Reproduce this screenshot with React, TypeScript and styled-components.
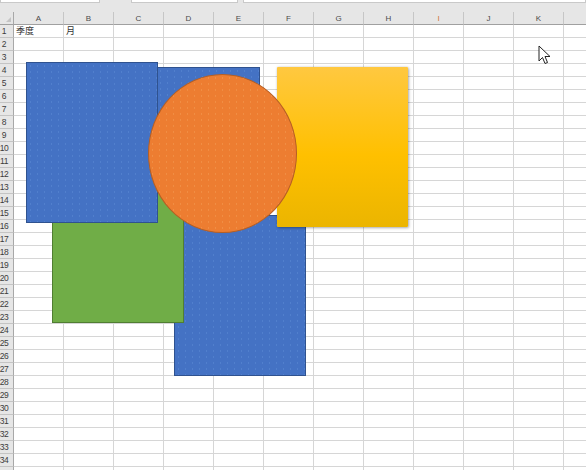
import styled, { createGlobalStyle } from 'styled-components';

const COLS = ['A', 'B', 'C', 'D', 'E', 'F', 'G', 'H', 'I', 'J', 'K', 'L'];
const ROW_COUNT = 35;
// last row / column only peek in at the window edge, their labels lie outside
const VISIBLE_ROWS = 34;
const VISIBLE_COLS = 11;

const GlobalStyle = createGlobalStyle`
  html, body {
    margin: 0;
    padding: 0;
    background: #fff;
  }
  body {
    font-family: "Liberation Sans", "Noto Sans CJK SC", sans-serif;
    overflow: hidden;
  }
`;

const Window = styled.div`
  position: relative;
  width: 586px;
  height: 470px;
  overflow: hidden;
  background: #e6e6e6;
`;

// bottom edge of the formula bar
const TopStrip = styled.div`
  height: 12px;
  display: grid;
  grid-template-columns: 100px 107px 1fr;
  column-gap: 31px;
  align-items: start;

  & > :last-child {
    margin-left: -26px;
  }
`;

const BarBox = styled.div`
  height: 2px;
  background: #fff;
  border: 1px solid #c9c9c9;
  border-top: none;
`;

const Sheet = styled.div`
  display: grid;
  grid-template-columns: 14px repeat(12, 50px);
  grid-auto-rows: 13px;
`;

const Corner = styled.div`
  position: relative;
  background: #e6e6e6;
  border-right: 1px solid #a8a8a8;
  border-bottom: 1px solid #a0a0a0;
  box-sizing: border-box;

  &::after {
    content: '';
    position: absolute;
    right: 2px;
    bottom: 2px;
    border-left: 5px solid transparent;
    border-bottom: 5px solid #c4c4c4;
  }
`;

const ColHead = styled.div<{ $tint?: string }>`
  display: flex;
  align-items: center;
  justify-content: center;
  background: #e6e6e6;
  border-right: 1px solid #c6c6c6;
  border-bottom: 1px solid #a0a0a0;
  box-sizing: border-box;
  font-size: 8px;
  color: ${p => p.$tint || '#4a4a4a'};
`;

const RowHead = styled.div`
  display: flex;
  align-items: center;
  justify-content: center;
  padding-right: 5px;
  background: #e6e6e6;
  border-right: 1px solid #a8a8a8;
  border-bottom: 1px solid #c4c4c4;
  box-sizing: border-box;
  font-size: 8.5px;
  color: #3c3c3c;
  letter-spacing: -0.4px;
  white-space: nowrap;
`;

const Cell = styled.div`
  background: #fff;
  border-right: 1px solid #d6d6d6;
  border-bottom: 1px solid #d6d6d6;
  box-sizing: border-box;
  padding-left: 2px;
  font-size: 9px;
  line-height: 12px;
  color: #333;
  white-space: nowrap;
`;

// floating drawing layer over the sheet
const Canvas = styled.div`
  position: absolute;
  inset: 0;
  pointer-events: none;
`;

const Shape = styled.div<{ $x: number; $y: number; $w: number; $h: number }>`
  position: absolute;
  left: ${p => p.$x}px;
  top: ${p => p.$y}px;
  width: ${p => p.$w}px;
  height: ${p => p.$h}px;
  box-sizing: border-box;
`;

const BlueRect = styled(Shape)`
  background: #4472c4;
  border: 1px solid #2f528f;
  background-image: radial-gradient(rgba(120, 170, 230, 0.25) 0.6px, transparent 0.8px);
  background-size: 7px 6px;
`;

const GreenRect = styled(Shape)`
  background: #70ad47;
  border: 1px solid #507e32;
`;

const GoldRect = styled(Shape)`
  background: linear-gradient(#ffc840 0%, #ffc000 55%, #ebb500 100%);
  box-shadow: 1px 1px 3px rgba(0, 0, 0, 0.3), 0 0 2px rgba(0, 0, 0, 0.15);
  border-radius: 1px;
`;

const Oval = styled(Shape)`
  border-radius: 50%;
  background: #ed7d31;
  border: 1px solid #b65f24;
  background-image: radial-gradient(rgba(250, 180, 110, 0.3) 0.6px, transparent 0.8px);
  background-size: 7px 6px;
`;

const Pointer = styled.svg`
  position: absolute;
  left: 538px;
  top: 45px;
`;

export default function App() {
  const rows = Array.from({ length: ROW_COUNT }, (_, i) => i + 1);

  return (
    <Window>
      <GlobalStyle />
      <TopStrip>
        <BarBox />
        <BarBox />
        <BarBox />
      </TopStrip>
      <Sheet>
        <Corner />
        {COLS.map((c, i) => (
          <ColHead key={c} $tint={c === 'I' ? '#d07a3a' : undefined}>
            {i < VISIBLE_COLS ? c : ''}
          </ColHead>
        ))}
        {rows.map(r => [
          <RowHead key={`h${r}`}>{r <= VISIBLE_ROWS ? r : ''}</RowHead>,
          ...COLS.map(c => (
            <Cell key={`${c}${r}`}>
              {r === 1 && c === 'A' ? '季度' : r === 1 && c === 'B' ? '月' : ''}
            </Cell>
          )),
        ])}
      </Sheet>

      <Canvas>
        <BlueRect $x={128} $y={67} $w={132} $h={160} />
        <BlueRect $x={174} $y={215} $w={132} $h={161} />
        <GreenRect $x={52} $y={163} $w={132} $h={160} />
        <BlueRect $x={26} $y={62} $w={132} $h={161} />
        <GoldRect $x={277} $y={67} $w={131} $h={160} />
        <Oval $x={148} $y={74} $w={149} $h={159} />
        <Pointer width="14" height="20" viewBox="0 0 14 20">
          <path
            d="M1 1 L1 16 L4.5 12.5 L7 18.5 L9.5 17.5 L7 11.5 L12 11.5 Z"
            fill="#fff"
            stroke="#222"
            strokeWidth="1"
            strokeLinejoin="round"
          />
        </Pointer>
      </Canvas>
    </Window>
  );
}
